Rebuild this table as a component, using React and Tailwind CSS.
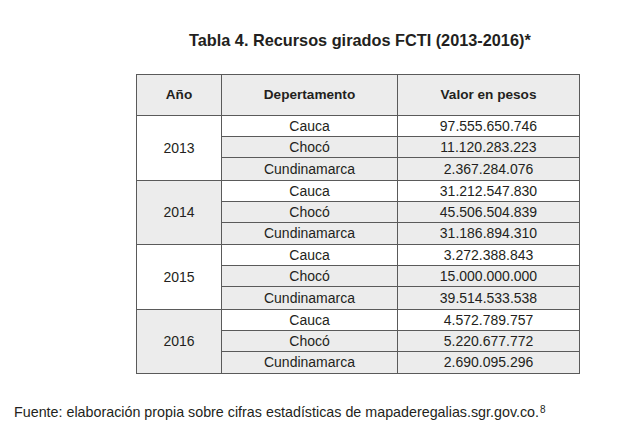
import React from "react";

const data = [
  { year: "2013", rows: [["Cauca", "97.555.650.746"], ["Chocó", "11.120.283.223"], ["Cundinamarca", "2.367.284.076"]] },
  { year: "2014", rows: [["Cauca", "31.212.547.830"], ["Chocó", "45.506.504.839"], ["Cundinamarca", "31.186.894.310"]] },
  { year: "2015", rows: [["Cauca", "3.272.388.843"], ["Chocó", "15.000.000.000"], ["Cundinamarca", "39.514.533.538"]] },
  { year: "2016", rows: [["Cauca", "4.572.789.757"], ["Chocó", "5.220.677.772"], ["Cundinamarca", "2.690.095.296"]] },
];

export default function App() {
  return (
    <div className="w-[620px] h-[445px] bg-white text-[#231f20] font-['Liberation_Sans',Arial,sans-serif] overflow-hidden">
      {/* Title */}
      <h1 className="pt-[30px] pl-[189px] text-[16.3px] font-bold leading-[20px]">
        Tabla 4. Recursos girados FCTI (2013-2016)*
      </h1>

      {/* Table */}
      <div className="pl-[136px] pt-[24px]">
        <table className="border-collapse border-[1.5px] border-[#5a5a5a] text-[14px] leading-[16px]">
          <thead>
            <tr className="h-[41px] bg-[#ececec]">
              <th className="w-[85px] border border-[#5a5a5a] font-bold text-center text-[13.6px]">Año</th>
              <th className="w-[176px] border border-[#5a5a5a] font-bold text-center text-[13.6px]">Depertamento</th>
              <th className="w-[182px] border border-[#5a5a5a] font-bold text-center text-[13.6px]">Valor en pesos</th>
            </tr>
          </thead>
          <tbody>
            {data.map((block, bi) =>
              block.rows.map(([dep, val], ri) => {
                const rowBg = ri === 0 ? "bg-white" : "bg-[#ececec]";
                const h = ri === 2 ? "h-[22.5px]" : "h-[21px]";
                return (
                  <tr key={block.year + dep} className={h}>
                    {ri === 0 && (
                      <td
                        rowSpan={3}
                        className={`border border-[#5a5a5a] text-center ${bi % 2 === 0 ? "bg-white" : "bg-[#ececec]"}`}
                      >
                        {block.year}
                      </td>
                    )}
                    <td className={`border border-[#5a5a5a] text-center ${rowBg}`}>{dep}</td>
                    <td className={`border border-[#5a5a5a] text-center ${rowBg}`}>{val}</td>
                  </tr>
                );
              })
            )}
          </tbody>
        </table>
      </div>

      {/* Source note */}
      <p className="pt-[30px] pl-[14px] text-[14.3px] leading-[16px]">
        Fuente: elaboración propia sobre cifras estadísticas de mapaderegalias.sgr.gov.co.
        <sup className="text-[10px] relative -top-[4px] ml-[1px]">8</sup>
      </p>
    </div>
  );
}
